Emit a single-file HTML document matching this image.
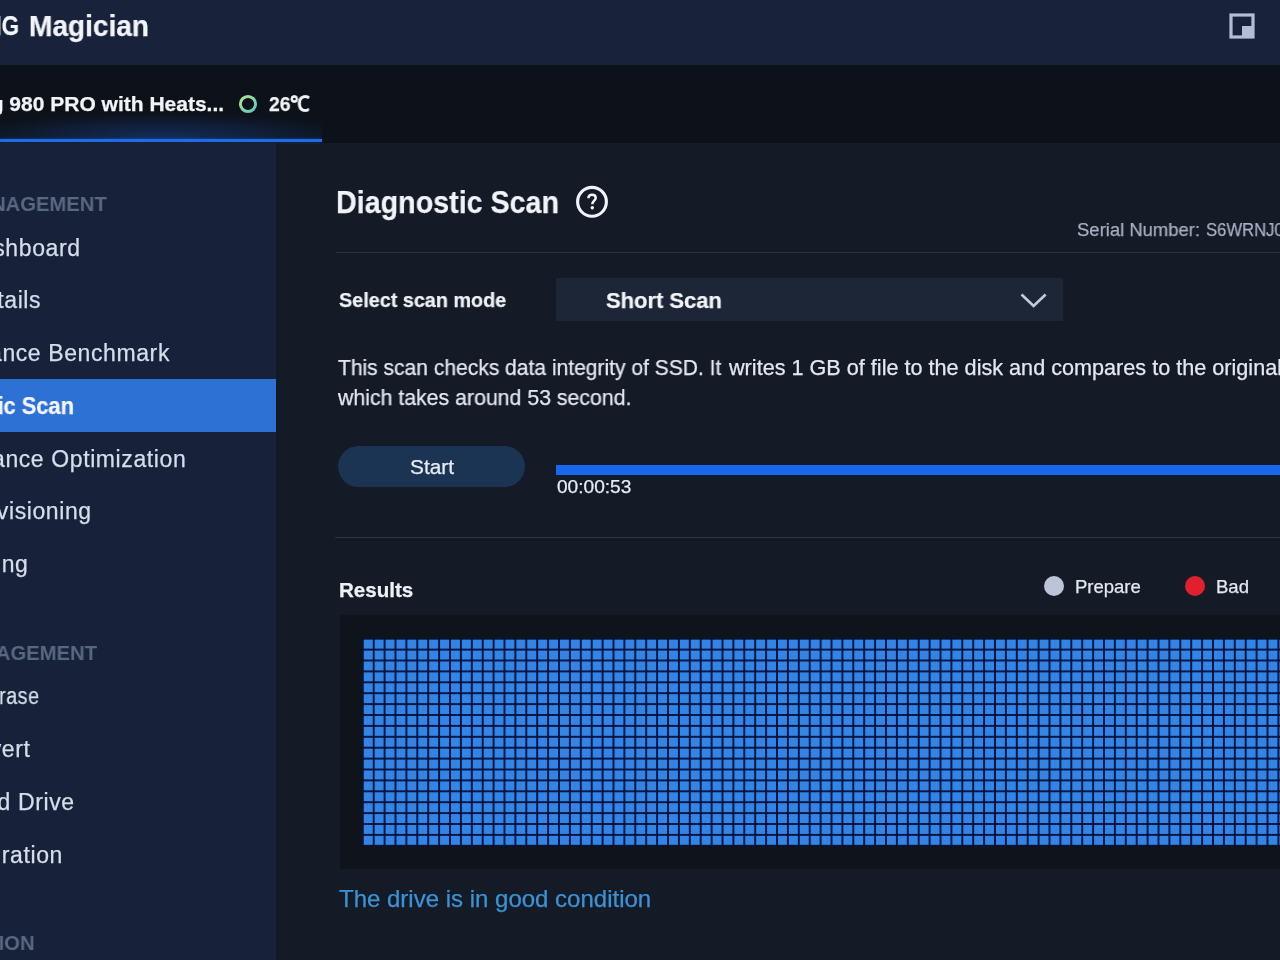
<!DOCTYPE html>
<html><head><meta charset="utf-8"><style>
html,body{margin:0;padding:0;}
body{width:1280px;height:960px;overflow:hidden;position:relative;background:#151a27;font-family:"Liberation Sans",sans-serif;}
.t{position:absolute;white-space:nowrap;line-height:1;will-change:transform;-webkit-text-stroke:0.25px currentColor;}
.r{position:absolute;}
</style></head><body>
<div class="r" style="left:0px;top:0px;width:1280px;height:65px;background:#18233b;"></div>
<div class="t" style="right:1261.10px;top:11.50px;font-size:28px;color:#f2f4f8;font-weight:bold;transform:scaleX(0.8);transform-origin:right top;">SAMSUNG</div>
<div class="t" style="left:29.00px;top:11.65px;font-size:29px;color:#f2f4f8;font-weight:bold;transform:scaleX(0.9669621273166802);transform-origin:left top;">Magician</div>
<svg class="r" style="left:1228px;top:11.5px" width="28" height="28" viewBox="0 0 28 28"><rect x="3" y="3" width="22" height="22" fill="none" stroke="#b3bed6" stroke-width="3.2"/><rect x="14" y="14" width="11" height="11" fill="#b3bed6"/></svg>
<div class="r" style="left:0px;top:65px;width:1280px;height:78px;background:#0d1119;"></div>
<div class="r" style="left:0px;top:112px;width:322px;height:27px;background:radial-gradient(ellipse 65% 100% at 50% 100%, rgba(28,85,185,0.42) 0%, rgba(25,75,165,0) 100%);"></div>
<div class="r" style="left:0px;top:139px;width:322px;height:3px;background:#1f6de6;box-shadow:0 0 3px rgba(30,105,220,0.55);"></div>
<div class="t" style="right:1055.50px;top:93.22px;font-size:21px;color:#f2f4f8;font-weight:bold;">Samsung 980 PRO with Heats...</div>
<svg class="r" style="left:238px;top:93.7px" width="20" height="20" viewBox="0 0 20 20"><defs><linearGradient id="rg" x1="0" y1="0" x2="1" y2="1"><stop offset="0" stop-color="#b4e58c"/><stop offset="1" stop-color="#5cc3c4"/></linearGradient></defs><circle cx="10" cy="10" r="7.6" fill="none" stroke="url(#rg)" stroke-width="3"/></svg>
<div class="t" style="left:268.90px;top:93.22px;font-size:21px;color:#f2f4f8;font-weight:bold;transform:scaleX(0.92);transform-origin:left top;">26℃</div>
<div class="r" style="left:0px;top:143px;width:276px;height:817px;background:#17223a;"></div>
<div class="r" style="left:276px;top:143px;width:6px;height:817px;background:linear-gradient(to right, #0e1a27 0%, rgba(22,27,41,0) 100%);"></div>
<div class="r" style="left:0px;top:379.2px;width:276px;height:53.3px;background:#2e71d5;"></div>
<div class="t" style="right:1199.70px;top:236.53px;font-size:23px;color:#d6deeb;letter-spacing:0.6px;">Drive Dashboard</div>
<div class="t" style="right:1238.60px;top:289.03px;font-size:23px;color:#d6deeb;letter-spacing:0.6px;">Drive Details</div>
<div class="t" style="right:1109.90px;top:341.93px;font-size:23px;color:#d6deeb;letter-spacing:0.6px;">Performance Benchmark</div>
<div class="t" style="right:1093.40px;top:447.53px;font-size:23px;color:#d6deeb;letter-spacing:0.6px;">Performance Optimization</div>
<div class="t" style="right:1188.40px;top:500.33px;font-size:23px;color:#d6deeb;letter-spacing:0.6px;">Over Provisioning</div>
<div class="t" style="right:1251.80px;top:553.13px;font-size:23px;color:#d6deeb;letter-spacing:0.6px;">Data Sharing</div>
<div class="t" style="right:1240.68px;top:684.53px;font-size:23px;color:#d6deeb;transform:scaleX(0.86);transform-origin:right top;letter-spacing:0.6px;">Secure Erase</div>
<div class="t" style="right:1249.90px;top:737.83px;font-size:23px;color:#d6deeb;letter-spacing:0.6px;">PSID Revert</div>
<div class="t" style="right:1204.90px;top:790.93px;font-size:23px;color:#d6deeb;letter-spacing:0.6px;">Encrypted Drive</div>
<div class="t" style="right:1217.40px;top:843.83px;font-size:23px;color:#d6deeb;letter-spacing:0.6px;">Data Migration</div>
<div class="t" style="right:1206.00px;top:394.73px;font-size:23px;color:#f4f7fc;font-weight:bold;transform:scaleX(0.95);transform-origin:right top;">Diagnostic Scan</div>
<div class="t" style="right:1172.70px;top:193.22px;font-size:21px;color:#5a6781;font-weight:bold;transform:scaleX(0.964);transform-origin:right top;-webkit-text-stroke:0;">DRIVE MANAGEMENT</div>
<div class="t" style="right:1183.00px;top:642.22px;font-size:21px;color:#5a6781;font-weight:bold;transform:scaleX(0.964);transform-origin:right top;-webkit-text-stroke:0;">DATA MANAGEMENT</div>
<div class="t" style="right:1245.50px;top:932.22px;font-size:21px;color:#5a6781;font-weight:bold;transform:scaleX(0.964);transform-origin:right top;-webkit-text-stroke:0;">INFORMATION</div>
<div class="t" style="left:336.00px;top:185.91px;font-size:32px;color:#f0f3f8;font-weight:bold;transform:scaleX(0.8957262210796915);transform-origin:left top;">Diagnostic Scan</div>
<svg class="r" style="left:574px;top:184px" width="36" height="36" viewBox="0 0 36 36"><circle cx="18" cy="17.8" r="14.4" fill="none" stroke="#f0f3f8" stroke-width="3.1"/><path d="M14.4 14.2 C14.4 11.7 16 10.7 18.1 10.7 C20.3 10.7 21.7 12 21.7 13.9 C21.7 16.4 18.3 16.9 18.3 20.2" fill="none" stroke="#f0f3f8" stroke-width="2.5"/><circle cx="18.3" cy="23.8" r="1.75" fill="#f0f3f8"/></svg>
<div class="t" style="left:1077.00px;top:220.94px;font-size:18.5px;color:#a8b0c2;transform:scaleX(0.9967585089141004);transform-origin:left top;">Serial Number:</div>
<div class="t" style="left:1205.80px;top:220.94px;font-size:18.5px;color:#a8b0c2;transform:scaleX(0.9);transform-origin:left top;">S6WRNJ0</div>
<div class="r" style="left:336px;top:252px;width:944px;height:1px;background:#2a3140;"></div>
<div class="t" style="left:338.50px;top:289.22px;font-size:21px;color:#eef1f6;font-weight:bold;transform:scaleX(0.9422372499295576);transform-origin:left top;">Select scan mode</div>
<div class="r" style="left:556px;top:278px;width:507px;height:43px;background:#1d2636;"></div>
<div class="t" style="left:606.40px;top:289.95px;font-size:22.5px;color:#f2f4f8;font-weight:bold;transform:scaleX(0.9752512202124606);transform-origin:left top;">Short Scan</div>
<svg class="r" style="left:1018px;top:289px" width="32" height="22" viewBox="0 0 32 22"><path d="M3.5 5.5 L15.6 17 L27.6 5.5" fill="none" stroke="#c3cadb" stroke-width="2.7"/></svg>
<div class="t" style="left:337.80px;top:358.05px;font-size:21.5px;color:#e4e8ef;transform:scaleX(0.978);transform-origin:left top;">This scan checks data integrity of SSD. It</div>
<div class="t" style="left:728.80px;top:358.05px;font-size:21.5px;color:#e4e8ef;transform:scaleX(1.006003274513371);transform-origin:left top;">writes 1 GB of file to the disk and compares to the original</div>
<div class="t" style="left:338.40px;top:388.30px;font-size:21.5px;color:#e4e8ef;transform:scaleX(0.99);transform-origin:left top;">which takes around 53 second.</div>
<div class="r" style="left:338px;top:446px;width:187px;height:41px;background:#1c3454;border-radius:20.5px;"></div>
<div class="t" style="left:409.70px;top:456.65px;font-size:20.5px;color:#e8edf5;transform:scaleX(1.0174530639211585);transform-origin:left top;">Start</div>
<div class="r" style="left:556px;top:465px;width:724px;height:10px;background:#1868ee;"></div>
<div class="t" style="left:556.50px;top:477.32px;font-size:19px;color:#e8edf5;transform:scaleX(1.0054054054054056);transform-origin:left top;">00:00:53</div>
<div class="r" style="left:335px;top:537px;width:945px;height:1px;background:#2a3140;"></div>
<div class="t" style="left:338.70px;top:579.85px;font-size:20.5px;color:#eef1f6;font-weight:bold;transform:scaleX(1.0033105871224917);transform-origin:left top;">Results</div>
<div class="r" style="left:1044px;top:576px;width:20px;height:20px;border-radius:50%;background:#bcc5d8"></div>
<div class="t" style="left:1074.50px;top:577.59px;font-size:18.5px;color:#e4e8ef;">Prepare</div>
<div class="r" style="left:1185px;top:576px;width:20px;height:20px;border-radius:50%;background:#e1202f"></div>
<div class="t" style="left:1215.50px;top:577.59px;font-size:18.5px;color:#e4e8ef;">Bad</div>
<div class="r" style="left:339.5px;top:614.5px;width:941px;height:254px;background:#0f131b;"></div>
<svg class="r" style="left:0;top:0" width="1280" height="960" viewBox="0 0 1280 960"><defs><pattern id="gp" x="362.8" y="638.7" width="10.9" height="10.9" patternUnits="userSpaceOnUse"><rect x="0" y="0" width="10.9" height="10.9" fill="#03123f"/><rect x="0.95" y="0.95" width="9.0" height="9.0" fill="#3385e5"/></pattern></defs><rect x="362.8" y="638.7" width="917.2" height="207.10" fill="url(#gp)"/></svg>
<div class="t" style="left:339.40px;top:886.88px;font-size:24px;color:#3b93d5;">The drive is in good condition</div>
</body></html>
